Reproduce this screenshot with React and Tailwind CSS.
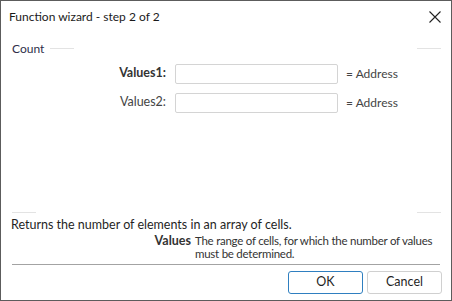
const font = { fontFamily: 'Lato, "Noto Sans", sans-serif' }

function ParamRow({ label, bold }) {
  return (
    <div className="flex h-[29px] items-center">
      <span className={`w-[166px] pr-[1px] text-right text-[12.5px] ${bold ? 'font-bold text-[#333]' : 'text-[#444]'}`}>
        {label}
      </span>
      <div className="ml-[8px] h-[20px] w-[163px] rounded-[2px] border border-[#d4d4d4] bg-white" />
      <span className="ml-[8px] text-[12px] text-[#444]">= Address</span>
    </div>
  )
}

export default function App() {
  return (
    <div
      className="flex h-[301px] w-[452px] flex-col border border-[#5c5c5c] bg-white text-[#1f1f1f]"
      style={font}
    >
      <div className="flex h-[31px] shrink-0 items-center justify-between pl-[8px] pr-[9px]">
        <span className="text-[12px] text-[#1a1a1a]">Function wizard - step 2 of 2</span>
        <svg width="14" height="14" viewBox="0 0 14 14" className="text-[#222]">
          <path d="M1.5 1.5 L12.5 12.5 M12.5 1.5 L1.5 12.5" stroke="currentColor" strokeWidth="1.1" />
        </svg>
      </div>

      <div className="mt-[8px] flex h-[17px] items-center px-[11px]">
        <span className="text-[12px] text-[#2e2e4a]">Count</span>
        <div className="ml-[6px] h-px w-[24px] bg-[#e3e3e3]" />
        <div className="flex-1" />
        <div className="mr-[-1px] h-px w-[24px] bg-[#e3e3e3]" />
      </div>

      <div className="mt-[2px] flex flex-col">
        <ParamRow label="Values1:" bold />
        <ParamRow label="Values2:" />
      </div>

      <div className="flex-1" />

      <div className="flex h-px items-center justify-between px-[11px]">
        <div className="h-px w-[24px] bg-[#e3e3e3]" />
        <div className="mr-[-1px] h-px w-[24px] bg-[#e3e3e3]" />
      </div>

      <div className="mt-[4px] px-[10px] text-[12.5px] leading-[16px] text-[#1f1f1f]">
        Returns the number of elements in an array of cells.
      </div>
      <div className="mt-[1px] flex pl-[10px] pr-[12px] leading-[13px]">
        <span className="w-[180px] shrink-0 text-right text-[12.5px] font-bold text-[#333]">Values</span>
        <span className="ml-[4px] whitespace-nowrap text-[11.5px] tracking-[-0.25px] text-[#333]">
          The range of cells, for which the number of values
          <br />
          must be determined.
        </span>
      </div>

      <div className="mx-[11px] mt-[4px] h-px bg-[#a3a3a3]" />

      <div className="flex h-[35px] items-center justify-end gap-[4px] pr-[9px]">
        <button className="h-[23px] w-[75px] rounded-[3px] border border-[#2f7fc0] bg-white text-[12.5px] text-[#1f1f1f]">
          OK
        </button>
        <button className="h-[23px] w-[75px] rounded-[3px] border border-[#d0d0d0] bg-white text-[12.5px] text-[#1f1f1f]">
          Cancel
        </button>
      </div>
    </div>
  )
}
